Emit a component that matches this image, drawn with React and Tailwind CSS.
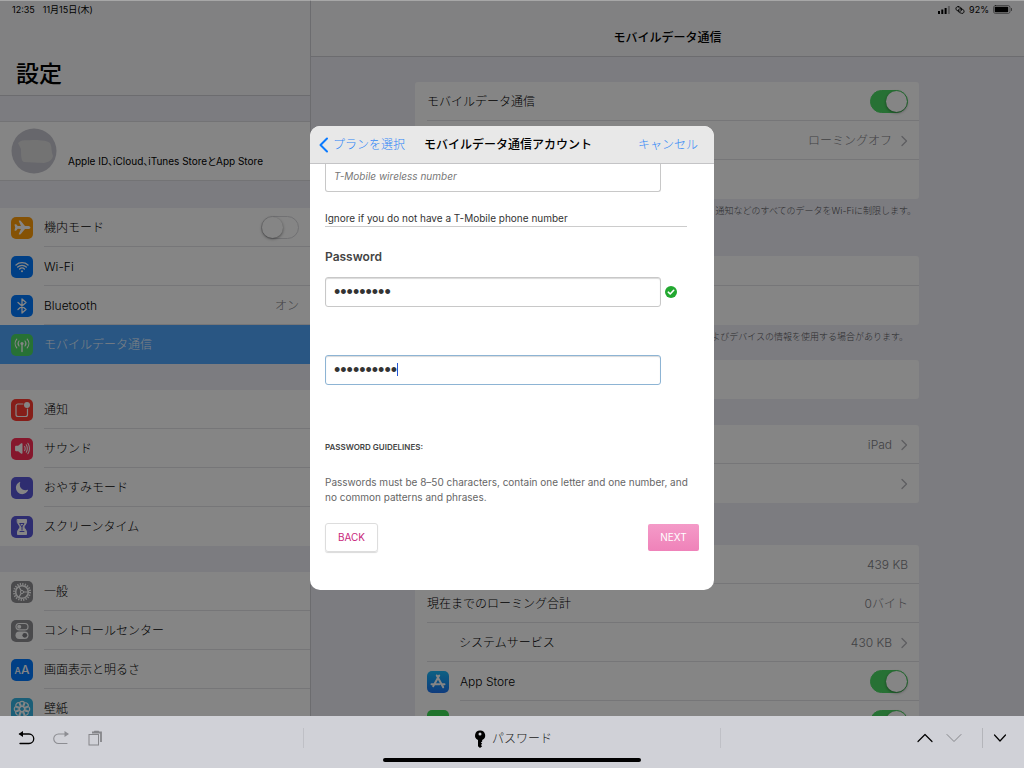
import React from 'react'
import { useState } from 'react'
import { IoAirplane, IoWifi, IoMoon, IoVolumeHigh } from 'react-icons/io5'

const Svg = ({ children, className = 'h-[22px] w-[22px]', box = '0 0 22 22' }) => (
  <svg
    viewBox={box}
    className={className}
    fill="none"
    stroke="currentColor"
    strokeLinecap="round"
    strokeLinejoin="round"
    aria-hidden="true"
  >
    {children}
  </svg>
)

const BluetoothIcon = () => (
  <Svg>
    <path d="M7 7.5l8 7-4 3.5V4l4 3.5-8 7" strokeWidth="1.3" />
  </Svg>
)

const AntennaIcon = () => (
  <Svg>
    <circle cx="11" cy="9.5" r="1.6" fill="currentColor" stroke="none" />
    <path d="M11 10v7.5" strokeWidth="1.4" />
    <path
      d="M8 7a4 4 0 000 5M14 7a4 4 0 010 5M5.8 5.2a6.5 6.5 0 000 8.6M16.2 5.2a6.5 6.5 0 010 8.6"
      strokeWidth="1.1"
    />
  </Svg>
)

const NoticeIcon = () => (
  <Svg>
    <path
      d="M12 5H7a2 2 0 00-2 2v8.5a2 2 0 002 2h7.5a2 2 0 002-2V10"
      strokeWidth="1.2"
    />
    <circle cx="16" cy="6" r="3" fill="currentColor" stroke="none" />
  </Svg>
)

const HourglassIcon = () => (
  <Svg>
    <path
      d="M6.5 3.5h9v3.2L12.8 11l2.7 4.3v3.2h-9v-3.2L9.2 11 6.5 6.7z"
      fill="currentColor"
      strokeWidth="1"
    />
    <path d="M9 7.5h4L11 10.5zM11 10v4M9 15.5h4" stroke="#5856d6" strokeWidth="1" />
  </Svg>
)

const GearIcon = () => (
  <Svg>
    <circle cx="11" cy="11" r="8" strokeWidth="2" strokeDasharray="1.3 1.213" strokeLinecap="butt" />
    <circle cx="11" cy="11" r="6.3" strokeWidth="1.6" />
    <circle cx="11" cy="11" r="1.6" strokeWidth="1" />
    <path d="M12.6 11H17M10.2 9.6L8 6M10.2 12.4L8 16" strokeWidth="1.2" />
  </Svg>
)

const ControlIcon = () => (
  <Svg>
    <rect x="5" y="3.5" width="12" height="6.4" rx="3.2" strokeWidth="1.2" />
    <circle cx="8.2" cy="6.7" r="2" fill="currentColor" stroke="none" />
    <rect x="4.5" y="11.6" width="13" height="7.4" rx="3.7" fill="currentColor" stroke="none" />
    <circle cx="13.8" cy="15.3" r="2.4" fill="#7d7e83" stroke="none" />
  </Svg>
)

const FlowerIcon = () => (
  <Svg>
    {[0, 45, 90, 135, 180, 225, 270, 315].map((deg) => (
      <circle
        key={deg}
        cx="11"
        cy="5.8"
        r="2.5"
        strokeWidth="1.2"
        transform={`rotate(${deg} 11 11)`}
      />
    ))}
    <circle cx="11" cy="11" r="2.6" strokeWidth="1.3" />
  </Svg>
)

const StoreIcon = () => (
  <Svg>
    <path
      d="M12.2 4.5L6.2 15.2M9.8 4.5l6.4 11.8M4.5 13.3h8M15 13.3h2.5"
      strokeWidth="2"
    />
  </Svg>
)

const ChevronRight = () => (
  <Svg box="0 0 8 12" className="ml-2 h-3 w-2 shrink-0 text-[#b4b4b9]">
    <path d="M2 1.5L6.5 6 2 10.5" strokeWidth="1.3" />
  </Svg>
)

const Switch = ({ label, on }) => {
  const [checked, setChecked] = useState(on)
  return (
    <input
      type="checkbox"
      role="switch"
      aria-label={label}
      checked={checked}
      onChange={() => setChecked(!checked)}
      className="flex h-[23px] w-[38px] shrink-0 appearance-none items-center rounded-full border border-[#d8d8dc] bg-white before:h-[21px] before:w-[21px] before:rounded-full before:bg-white before:shadow-[0_1px_3px_rgba(0,0,0,0.45)] checked:justify-end checked:border-[#4cd964] checked:bg-[#4cd964]"
    />
  )
}

const groups = [
  [
    { name: '機内モード', color: 'bg-[#ff9d0a]', icon: <IoAirplane size={17} />, toggle: true },
    { name: 'Wi-Fi', color: 'bg-[#007aff]', icon: <IoWifi size={16} /> },
    { name: 'Bluetooth', color: 'bg-[#007aff]', icon: <BluetoothIcon />, value: 'オン' },
    { name: 'モバイルデータ通信', color: 'bg-[#4cd964]', icon: <AntennaIcon />, active: true },
  ],
  [
    { name: '通知', color: 'bg-[#ff3b30]', icon: <NoticeIcon /> },
    { name: 'サウンド', color: 'bg-[#ff2d55]', icon: <IoVolumeHigh size={17} /> },
    { name: 'おやすみモード', color: 'bg-[#5856d6]', icon: <IoMoon size={14} /> },
    { name: 'スクリーンタイム', color: 'bg-[#5856d6]', icon: <HourglassIcon /> },
  ],
  [
    { name: '一般', color: 'bg-[#8e8e93]', icon: <GearIcon /> },
    { name: 'コントロールセンター', color: 'bg-[#8e8e93]', icon: <ControlIcon /> },
    {
      name: '画面表示と明るさ',
      color: 'bg-[#007aff]',
      icon: (
        <span className="font-medium">
          <span className="text-[9px]">A</span>
          <span className="text-xs">A</span>
        </span>
      ),
    },
    { name: '壁紙', color: 'bg-[#35b4e4]', icon: <FlowerIcon /> },
  ],
]

const SideRow = ({ item }) => {
  const Tag = item.toggle ? 'div' : 'a'
  return (
    <Tag
      href={item.toggle ? undefined : '#'}
      className={`group flex h-[39px] items-center gap-[11px] pl-[11px] ${
        item.active ? 'bg-[#4fa6fb] text-[#f0f6ff]' : ''
      }`}
    >
      <span
        className={`flex h-[22px] w-[22px] shrink-0 items-center justify-center rounded-[5px] text-white ${item.color}`}
      >
        {item.icon}
      </span>
      <span
        className={`flex h-full flex-1 items-center justify-between pr-[11px] pt-px ${
          item.active ? '' : 'border-b border-[#e2e2e6] group-last:border-0'
        }`}
      >
        {item.name}
        {item.value ? <span className="text-[#7e7e84]">{item.value}</span> : ''}
        {item.toggle ? <Switch label={item.name} on={false} /> : ''}
      </span>
    </Tag>
  )
}

const Sidebar = () => (
  <aside className="w-[311px] shrink-0 border-r border-[#d0d0d5] bg-[#eeeef5]">
    <div className="h-24 border-b border-[#d0d0d5] bg-[#f8f8fa]">
      <div className="flex gap-2 px-3 pt-1 text-[9px] font-normal leading-[11px]">
        <span>12:35</span>
        <span>11月15日(木)</span>
      </div>
      <h1 className="px-4 pt-[41px] text-[23px] font-medium leading-9">設定</h1>
    </div>
    <a
      href="#"
      className="mt-[25px] flex h-[60px] items-center gap-[11px] border-y border-[#dcdce0] bg-white px-[11px]"
    >
      <Svg box="0 0 46 46" className="h-[46px] w-[46px] shrink-0">
        <circle cx="23" cy="23" r="22.5" fill="#c6c6cf" stroke="none" />
        <path
          d="M7 15c4-4 8-2 14-3 7 0 14 0 18 3 2 4 1 7 3 13-1 4-4 6-9 7-8 0-14-1-20-1-3-1-3-7-3-13z"
          fill="#dcdcdc"
          stroke="none"
        />
      </Svg>
      <span className="pt-5 text-[10px] font-normal leading-4 [font-feature-settings:'palt']">
        Apple ID、iCloud、iTunes StoreとApp Store
      </span>
    </a>
    {groups.map((group, i) => (
      <nav key={i} className="mt-[26px] bg-white first-of-type:mt-[27px]">
        {group.map((item) => (
          <SideRow key={item.name} item={item} />
        ))}
      </nav>
    ))}
  </aside>
)

const Card = ({ children, className = '' }) => (
  <section className={`overflow-hidden rounded-[3px] bg-white ${className}`}>{children}</section>
)

const Row = ({ name = '', value, more, on, icon, inset, className = 'h-[39px]' }) => (
  <div className={`group flex items-center pl-3 ${className}`}>
    {icon ? <span className="w-[33px] shrink-0">{icon}</span> : ''}
    <div className="flex h-full flex-1 items-center border-b border-[#e2e2e6] pr-[11px] pt-px group-last:border-0">
      <span className={`flex-1 ${inset ? 'pl-8' : ''}`}>{name}</span>
      {value ? <span className="text-[#7e7e84]">{value}</span> : ''}
      {more ? <ChevronRight /> : ''}
      {on ? <Switch label={name} on /> : ''}
    </div>
  </div>
)

const Detail = () => (
  <main className="min-w-0 flex-1 bg-[#eeeef5]">
    <header className="h-[57px] border-b border-[#d0d0d5] bg-[#f8f8fa]">
      <div className="flex items-center justify-end gap-1 px-[11px] pt-1 text-[9px] font-normal leading-[11px]">
        <Svg box="0 0 13 8" className="h-2 w-[13px]">
          <g fill="currentColor" stroke="none">
            <rect x="0" y="5" width="2" height="3" />
            <rect x="3.3" y="3.5" width="2" height="4.5" />
            <rect x="6.6" y="2" width="2" height="6" />
            <rect x="9.9" y="0" width="2" height="8" opacity="0.3" />
          </g>
        </Svg>
        <Svg box="0 0 10 8" className="h-2 w-[10px]">
          <rect x="0.8" y="1" width="6" height="4" rx="2" strokeWidth="0.8" transform="rotate(20 4 3)" />
          <rect x="3.2" y="3" width="6" height="4" rx="2" strokeWidth="0.8" transform="rotate(20 6 5)" />
        </Svg>
        <span>92%</span>
        <Svg box="0 0 20 9" className="h-[9px] w-5">
          <rect x="0.5" y="0.5" width="16.5" height="8" rx="2" strokeWidth="0.7" opacity="0.6" />
          <rect x="1.7" y="1.7" width="13.5" height="5.6" rx="0.8" fill="currentColor" stroke="none" />
          <path d="M18.5 3.5v2" strokeWidth="0.9" opacity="0.6" />
        </Svg>
      </div>
      <h2 className="pt-[15px] text-center text-xs font-medium">モバイルデータ通信</h2>
    </header>
    <div className="flex flex-col pl-[104px] pr-[105px] pt-[25px]">
      <Card>
        <Row name="モバイルデータ通信" on />
        <Row value="ローミングオフ" more />
        <Row />
      </Card>
      <p className="mt-1 h-[53px] pr-[3px] text-right text-[9px] leading-4 text-[#55555a]">
        通知などのすべてのデータをWi-Fiに制限します。
      </p>
      <Card>
        <Row className="h-[30px]" />
        <Row />
      </Card>
      <p className="mt-1 h-[31px] pr-[11px] text-right text-[9px] leading-4 text-[#55555a]">
        よびデバイスの情報を使用する場合があります。
      </p>
      <Card>
        <Row />
      </Card>
      <Card className="mt-[26px]">
        <Row value="iPad" more />
        <Row more />
      </Card>
      <Card className="mt-[42px]">
        <Row value="439 KB" />
        <Row name="現在までのローミング合計" value="0バイト" />
        <Row name="システムサービス" value="430 KB" more inset />
        <Row
          name="App Store"
          on
          icon={
            <span className="block h-[22px] w-[22px] rounded-[5px] bg-linear-to-b from-[#1bb9fb] to-[#1e73f0] text-white">
              <StoreIcon />
            </span>
          }
        />
        <Row
          name="FaceTime"
          on
          icon={
            <span className="block h-[22px] w-[22px] rounded-[5px] bg-[#3ddc55] text-white">
              <Svg>
                <path
                  d="M5 7h7.5v8H5zM15 10l3-2v6l-3-2z"
                  fill="currentColor"
                  strokeWidth="1.5"
                />
              </Svg>
            </span>
          }
        />
      </Card>
    </div>
  </main>
)

const AccountDialog = () => {
  const [password, setPassword] = useState('abcdefgh1')
  const [confirm, setConfirm] = useState('abcdefgh12')
  return (
    <div
      role="dialog"
      aria-label="モバイルデータ通信アカウント"
      className="w-[404px] overflow-hidden rounded-[10px] bg-white pb-[38px]"
    >
      <header className="grid h-[38px] grid-cols-[1fr_auto_1fr] items-center border-b border-[#c4c4c6] bg-[#e8e8e8] pl-2 pr-4 text-xs">
        <button className="flex items-center gap-1 text-[#2f86f6]">
          <Svg box="0 0 11 16" className="h-4 w-[11px]">
            <path d="M9 1.5L2.5 8 9 14.5" stroke="#0a7aff" strokeWidth="2" />
          </Svg>
          プランを選択
        </button>
        <h2 className="font-medium">モバイルデータ通信アカウント</h2>
        <button className="text-right text-[#2f86f6]">キャンセル</button>
      </header>
      <form
        className="px-[15px] text-[10px] font-normal text-[#333]"
        onSubmit={(e) => e.preventDefault()}
      >
        <input
          type="text"
          aria-label="T-Mobile wireless number"
          placeholder="T-Mobile wireless number"
          className="block h-7 w-[336px] rounded-b-[3px] border border-t-0 border-[#c8c8c8] px-2 pb-1 italic placeholder:text-[#777]"
        />
        <p className="mr-3 mt-[18px] border-b border-[#ccc] leading-4">
          Ignore if you do not have a T-Mobile phone number
        </p>
        <label htmlFor="password" className="mt-[22px] block text-xs font-semibold leading-4 text-[#444]">
          Password
        </label>
        <div className="mt-3 flex items-center gap-1">
          <input
            id="password"
            type="password"
            value={password}
            onChange={(e) => setPassword(e.target.value)}
            className="h-[30px] w-[336px] rounded-[3px] border border-[#c8c8c8] px-2 font-['Liberation_Sans',sans-serif] text-lg shadow-[inset_0_1px_1px_rgba(0,0,0,0.15)]"
          />
          <Svg box="0 0 12 12" className="h-3 w-3 shrink-0">
            <circle cx="6" cy="6" r="6" fill="#22a830" stroke="none" />
            <path d="M3.3 6.2l1.9 1.8 3.5-3.7" stroke="#fff" strokeWidth="1.6" />
          </Svg>
        </div>
        <div className="relative mt-12 w-[336px]">
          <input
            type="password"
            aria-label="Confirm password"
            value={confirm}
            onChange={(e) => setConfirm(e.target.value)}
            className="block h-[30px] w-full rounded-[3px] border border-[#8db4d4] px-2 font-['Liberation_Sans',sans-serif] text-lg caret-transparent shadow-[inset_0_1px_1px_rgba(0,0,0,0.15)]"
          />
          <span className="absolute left-[72px] top-2 h-[13px] w-px bg-[#2456d6]" />
        </div>
        <h3 className="mt-[54px] text-[8px] font-semibold leading-4 text-[#444]">PASSWORD GUIDELINES:</h3>
        <p className="mt-5 leading-[15px] text-[#666]">
          Passwords must be 8–50 characters, contain one letter and one number, and no common patterns
          and phrases.
        </p>
        <div className="mt-[18px] flex items-center justify-between">
          <button
            type="button"
            className="h-[29px] w-[53px] rounded-[3px] border border-[#ddd] text-[#c8267b] shadow-[0_1px_1px_rgba(0,0,0,0.15)]"
          >
            BACK
          </button>
          <button className="h-[27px] w-[51px] rounded-[2px] bg-linear-to-b from-[#f49ac8] to-[#ef82b9] text-white">
            NEXT
          </button>
        </div>
      </form>
    </div>
  )
}

const KeyboardBar = () => (
  <footer className="relative grid h-[52px] shrink-0 grid-cols-[8fr_11fr_8fr] bg-[#d0d1d7] pb-2">
    <div className="flex items-center gap-[15px] pl-[17px]">
      <button aria-label="取り消す">
        <Svg box="0 0 20 18" className="h-[18px] w-5">
          <path d="M3 5h9a4.7 4.7 0 010 9.5H3" strokeWidth="1.3" />
          <path d="M6 2v6L1.500 5z" fill="currentColor" stroke="none" />
        </Svg>
      </button>
      <button aria-label="やり直す" className="text-[#8c8d92]">
        <Svg box="0 0 20 18" className="h-[18px] w-5">
          <path d="M15 5H6.5a4.7 4.7 0 000 9.5H15" strokeWidth="1.1" />
          <path d="M12.5 2v6L17 5z" fill="currentColor" stroke="none" />
        </Svg>
      </button>
      <button aria-label="ペースト" className="text-[#85868a]">
        <Svg box="0 0 18 18" className="h-[18px] w-[18px]">
          <rect x="2" y="5.5" width="9.5" height="10.5" strokeWidth="1" strokeLinejoin="miter" />
          <path d="M5 3.5h9V13" strokeWidth="1.8" strokeLinejoin="miter" strokeLinecap="butt" />
          <path d="M7.5 2.3h4" strokeWidth="1.2" />
        </Svg>
      </button>
    </div>
    <div className="my-3 flex items-center justify-center border-x border-[#bfc0c6]">
      <button className="flex items-center pt-px text-xs text-[#222]">
        <Svg box="0 0 16 18" className="h-[18px] w-4">
          <path
            fillRule="evenodd"
            d="M8 0.5a4.9 4.9 0 00-2 9.4v6.4L8 18l2.2-1.8-1.3-1.2 1.3-1.2-1.3-1.2 1.3-1V9.9A4.9 4.9 0 008 0.5zm0 1.9a1.5 1.5 0 110 3 1.5 1.5 0 010-3z"
            fill="#000"
            stroke="none"
          />
        </Svg>
        <span className="pl-1">パスワード</span>
      </button>
    </div>
    <div className="flex items-center justify-end pr-[17px]">
      <button aria-label="前へ" className="mr-[13px]">
        <Svg box="0 0 16 10" className="h-[10px] w-4">
          <path d="M1 8.5L8 1.5l7 7" strokeWidth="1.2" />
        </Svg>
      </button>
      <button aria-label="次へ" className="mr-5 text-[#85868a]">
        <Svg box="0 0 16 10" className="h-[10px] w-4">
          <path d="M1 1.5l7 7 7-7" strokeWidth="1" />
        </Svg>
      </button>
      <button aria-label="キーボードを閉じる" className="flex h-5 items-center border-l border-[#b4b5ba] pl-[10px]">
        <Svg box="0 0 14 10" className="h-[10px] w-[14px]">
          <path d="M1.5 2L7 8l5.5-6" strokeWidth="1.2" />
        </Svg>
      </button>
    </div>
    <span className="absolute bottom-[6px] left-1/2 h-1 w-[258px] -translate-x-1/2 rounded-full bg-black" />
  </footer>
)

const App = () => {
  return (
    <div className="flex h-screen flex-col overflow-hidden font-[Inter,'Noto_Sans_CJK_JP',sans-serif] text-xs font-light text-black">
      <div className="relative flex min-h-0 flex-1 overflow-hidden">
        <Sidebar />
        <Detail />
        <div className="absolute inset-0 flex items-center justify-center bg-black/48 shadow-[inset_0_1px_0_rgba(255,255,255,0.3)]">
          <AccountDialog />
        </div>
      </div>
      <KeyboardBar />
    </div>
  )
}

export default App
